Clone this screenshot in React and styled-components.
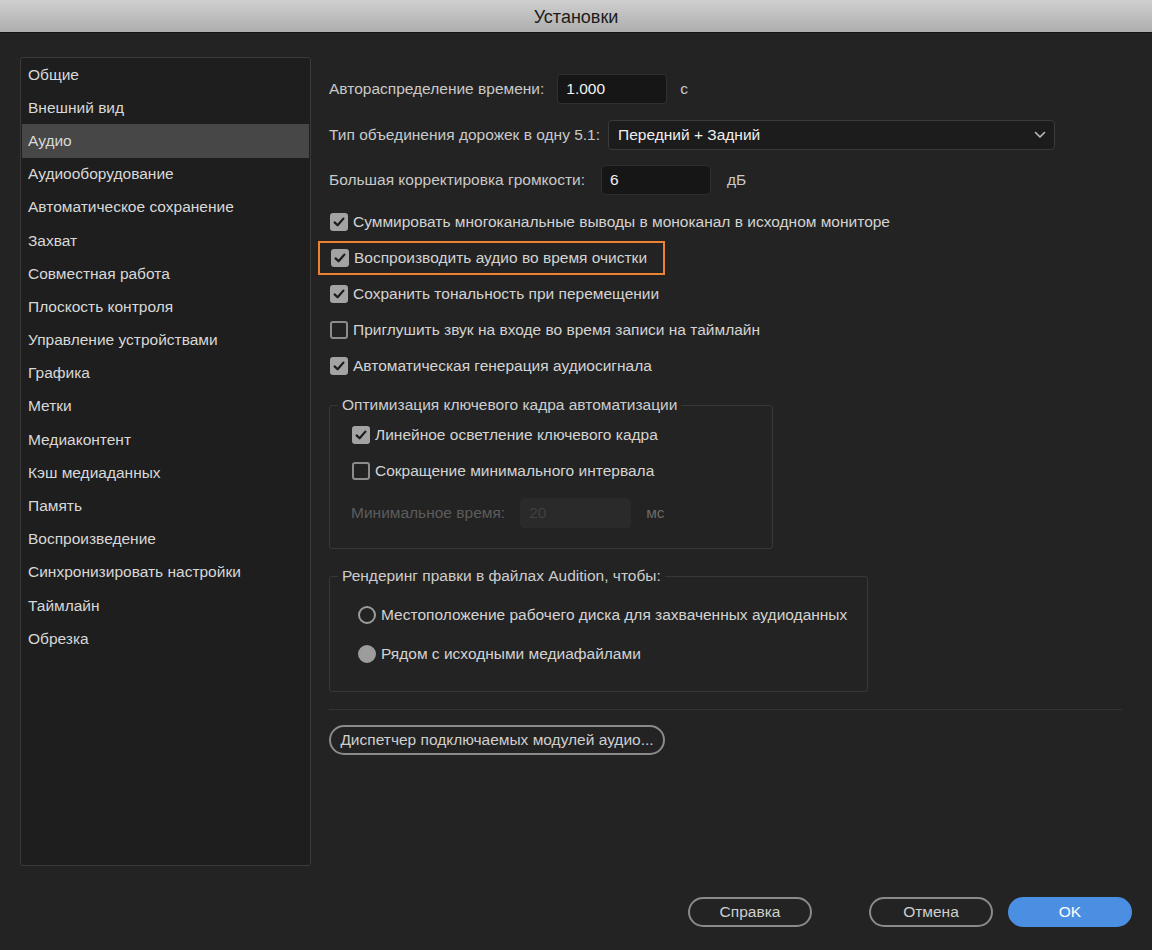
import React from 'react'
import styled, { createGlobalStyle } from 'styled-components'

const GlobalStyle = createGlobalStyle`
  html, body { margin: 0; padding: 0; background: #232323; }
  body { font-family: "Liberation Sans", Arial, sans-serif; -webkit-font-smoothing: antialiased; }
  * { box-sizing: border-box; }
`

const sections = [
  'Общие', 'Внешний вид', 'Аудио', 'Аудиооборудование', 'Автоматическое сохранение',
  'Захват', 'Совместная работа', 'Плоскость контроля', 'Управление устройствами',
  'Графика', 'Метки', 'Медиаконтент', 'Кэш медиаданных', 'Память', 'Воспроизведение',
  'Синхронизировать настройки', 'Таймлайн', 'Обрезка',
]

const Check = ({ checked }) => (
  <Box checked={checked}>
    {checked && (
      <svg width="14" height="14" viewBox="0 0 14 14">
        <path d="M2.6 7.4 L5.6 10.3 L11.4 3.6" fill="none" stroke="#1b1b1b" strokeWidth="2.2" strokeLinecap="round" strokeLinejoin="round" />
      </svg>
    )}
  </Box>
)

const CheckRow = ({ checked, children }) => (
  <OptionRow>
    <Check checked={checked} />
    <OptionText>{children}</OptionText>
  </OptionRow>
)

const RadioRow = ({ selected, children }) => (
  <OptionRow>
    <Radio selected={selected} />
    <OptionText>{children}</OptionText>
  </OptionRow>
)

function App() {
  return (
    <Window>
      <GlobalStyle />
      <TitleBar>Установки</TitleBar>
      <Body>
        <Sidebar>
          {sections.map((s) => (
            <NavItem key={s} active={s === 'Аудио'}>{s}</NavItem>
          ))}
        </Sidebar>
        <Content>
          <FieldRow gap={13}>
            <Label>Автораспределение времени:</Label>
            <Input value="1.000" width={110} />
            <Unit>с</Unit>
          </FieldRow>
          <FieldRow gap={8}>
            <Label>Тип объединения дорожек в одну 5.1:</Label>
            <Select>
              <span>Передний + Задний</span>
              <svg width="12" height="8" viewBox="0 0 12 8">
                <path d="M1.5 1.5 L6 6 L10.5 1.5" fill="none" stroke="#bdbdbd" strokeWidth="1.6" strokeLinecap="round" strokeLinejoin="round" />
              </svg>
            </Select>
          </FieldRow>
          <FieldRow gap={16}>
            <Label>Большая корректировка громкости:</Label>
            <Input value="6" width={110} />
            <Unit>дБ</Unit>
          </FieldRow>

          <Options>
            <CheckRow checked>Суммировать многоканальные выводы в моноканал в исходном мониторе</CheckRow>
            <Highlight>
              <CheckRow checked>Воспроизводить аудио во время очистки</CheckRow>
            </Highlight>
            <CheckRow checked>Сохранить тональность при перемещении</CheckRow>
            <CheckRow>Приглушить звук на входе во время записи на таймлайн</CheckRow>
            <CheckRow checked>Автоматическая генерация аудиосигнала</CheckRow>
          </Options>

          <Group width={444}>
            <Legend>Оптимизация ключевого кадра автоматизации</Legend>
            <GroupBody indent={21}>
              <CheckRow checked>Линейное осветление ключевого кадра</CheckRow>
              <CheckRow>Сокращение минимального интервала</CheckRow>
              <FieldRow disabled>
                <Label disabled>Минимальное время:</Label>
                <Input value="20" width={111} disabled />
                <Unit disabled>мс</Unit>
              </FieldRow>
            </GroupBody>
          </Group>

          <Group width={539} second>
            <Legend>Рендеринг правки в файлах Audition, чтобы:</Legend>
            <GroupBody indent={28} radios>
              <RadioRow>Местоположение рабочего диска для захваченных аудиоданных</RadioRow>
              <RadioRow selected>Рядом с исходными медиафайлами</RadioRow>
            </GroupBody>
          </Group>

          <Divider />
          <PillButton>Диспетчер подключаемых модулей аудио...</PillButton>
        </Content>
      </Body>
      <Footer>
        <PillButton wide spaced>Справка</PillButton>
        <PillButton wide>Отмена</PillButton>
        <PillButton wide primary>OK</PillButton>
      </Footer>
    </Window>
  )
}

export default App

const Window = styled.div`
  width: 1152px;
  height: 950px;
  display: flex;
  flex-direction: column;
  background: #232323;
  color: #d2d2d2;
  font-size: 15.5px;
  overflow: hidden;
`
const TitleBar = styled.div`
  height: 33px;
  flex: none;
  display: flex;
  align-items: center;
  justify-content: center;
  background: linear-gradient(#cfcfcf, #aeaeae);
  border-bottom: 1px solid #141414;
  color: #1c1c1c;
  font-size: 18px;
  padding-top: 2px;
`
const Body = styled.div`
  display: flex;
  padding: 24px 30px 0 20px;
  height: 833px;
  flex: none;
`
const Sidebar = styled.div`
  width: 291px;
  height: 809px;
  flex: none;
  background: #1e1e1e;
  border: 1px solid #3a3a3a;
  border-radius: 3px;
  padding: 0 1px;
`
const NavItem = styled.div`
  height: 33.2px;
  display: flex;
  align-items: center;
  padding-left: 6px;
  color: #d8d8d8;
  background: ${(p) => (p.active ? '#474747' : 'transparent')};
`
const Content = styled.div`
  flex: 1;
  margin-left: 18px;
  padding-top: 17px;
  display: flex;
  flex-direction: column;
`
const FieldRow = styled.div`
  display: flex;
  align-items: center;
  gap: ${(p) => p.gap ?? 15}px;
  height: 30px;
  margin-bottom: 15.5px;
`
const Label = styled.span`
  color: ${(p) => (p.disabled ? '#5c5c5c' : '#c9c9c9')};
  white-space: nowrap;
`
const Input = styled.div.attrs((p) => ({ children: p.value }))`
  width: ${(p) => p.width}px;
  height: 30px;
  display: flex;
  align-items: center;
  padding-left: 8px;
  border-radius: 4px;
  background: ${(p) => (p.disabled ? '#2a2a2a' : '#161616')};
  border: 1px solid ${(p) => (p.disabled ? '#2a2a2a' : '#303030')};
  color: ${(p) => (p.disabled ? '#404040' : '#f2f2f2')};
`
const Unit = styled.span`
  color: ${(p) => (p.disabled ? '#6a6a6a' : '#c9c9c9')};
`
const Select = styled.div`
  width: 447px;
  height: 30px;
  display: flex;
  align-items: center;
  justify-content: space-between;
  padding: 0 8px 0 9px;
  background: #1c1c1c;
  border: 1px solid #3a3a3a;
  border-radius: 4px;
  color: #efefef;
`
const Options = styled.div`
  display: flex;
  flex-direction: column;
  gap: 12px;
  margin-top: -0.5px;
`
const OptionRow = styled.div`
  display: flex;
  align-items: center;
  height: 24px;
  gap: 5px;
`
const OptionText = styled.span`
  color: #d3d3d3;
  white-space: nowrap;
`
const Box = styled.span`
  width: 18px;
  height: 18px;
  flex: none;
  display: flex;
  align-items: center;
  justify-content: center;
  border-radius: 3px;
  margin-left: 1px;
  background: ${(p) => (p.checked ? '#a3a3a3' : 'transparent')};
  border: 2px solid ${(p) => (p.checked ? '#a3a3a3' : '#8c8c8c')};
`
const Radio = styled.span`
  width: 18px;
  height: 18px;
  flex: none;
  border-radius: 50%;
  background: ${(p) => (p.selected ? '#9c9c9c' : 'transparent')};
  border: 2.5px solid #9c9c9c;
`
const Highlight = styled.div`
  width: 347px;
  height: 34px;
  margin: -5px 0 -5px -11px;
  padding: 3px 0 0 10px;
  border: 2px solid #ee8230;
`
const Group = styled.fieldset`
  width: ${(p) => p.width}px;
  margin: 17px 0 0;
  padding: 0;
  border: 1px solid #383838;
  border-radius: 3px;
`
const Legend = styled.legend`
  margin-left: 8px;
  padding: 0 4px;
  color: #cdcdcd;
  line-height: 20px;
`
const GroupBody = styled.div`
  display: flex;
  flex-direction: column;
  gap: ${(p) => (p.radios ? 15 : 12)}px;
  padding: ${(p) => (p.radios ? '17px' : '8px')} 0 ${(p) => (p.radios ? '25px' : '20px')} ${(p) => p.indent}px;

  & > ${FieldRow} {
    margin: 3px 0 0;
  }
`
const Divider = styled.div`
  height: 1px;
  background: #333333;
  margin: 17px 0 15px;
`
const PillButton = styled.button`
  font-family: inherit;
  font-size: 15.5px;
  height: 30px;
  width: ${(p) => (p.wide ? '124px' : '336px')};
  margin-right: ${(p) => (p.spaced ? '42px' : '0')};
  border-radius: 16px;
  border: 2px solid ${(p) => (p.primary ? '#4b8fe3' : '#8a8a8a')};
  background: ${(p) => (p.primary ? '#4b8fe3' : 'transparent')};
  color: ${(p) => (p.primary ? '#ffffff' : '#cfcfcf')};
  padding: 0;
  cursor: pointer;
`
const Footer = styled.div`
  flex: 1;
  display: flex;
  justify-content: flex-end;
  align-items: flex-start;
  gap: 15px;
  padding: 31px 20px 0;
`
